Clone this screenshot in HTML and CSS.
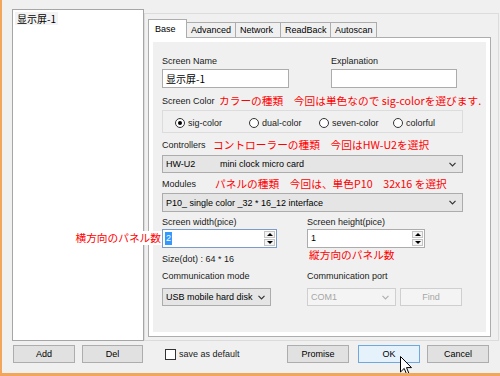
FILE: index.html
```html
<!DOCTYPE html>
<html lang="ja">
  <head>
    <meta charset="UTF-8" />
    <title>Screen settings</title>
    <link rel="stylesheet" href="styles.css">
  </head>
  <body>
    <div class="window">
      <div class="list">
        <div class="list-item">显示屏-1</div>
      </div>

      <div class="group">
        <div class="tabs">
          <div class="tab tab-base active">Base</div>
          <div class="tab tab-advanced">Advanced</div>
          <div class="tab tab-network">Network</div>
          <div class="tab tab-readback">ReadBack</div>
          <div class="tab tab-autoscan">Autoscan</div>
        </div>
        <div class="tab-panel">
          <div class="tab-page">
            <div class="row-two">
              <div class="name-field">
                <div class="label">Screen Name</div>
                <div class="input name-input">显示屏-1</div>
              </div>
              <div>
                <div class="label">Explanation</div>
                <div class="input expl-input"></div>
              </div>
            </div>

            <div class="caption-row caption-color">
              <span class="label">Screen Color</span>
              <span class="note">カラーの種類　今回は単色なので sig-colorを選びます.</span>
            </div>
            <div class="radio-box">
              <div class="radio radio-sig"><span class="radio-dot checked"></span>sig-color</div>
              <div class="radio radio-dual"><span class="radio-dot"></span>dual-color</div>
              <div class="radio radio-seven"><span class="radio-dot"></span>seven-color</div>
              <div class="radio"><span class="radio-dot"></span>colorful</div>
            </div>

            <div class="caption-row caption-ctrl">
              <span class="label">Controllers</span>
              <span class="note">コントローラーの種類　今回はHW-U2を選択</span>
            </div>
            <div class="select wide-select ctrl-select">
              <span class="sel-code">HW-U2</span>
              <span>mini clock micro card</span>
              <svg class="chevron" width="7" height="5" viewBox="0 0 7 5"><polyline points="0.5,0.8 3.5,3.8 6.5,0.8" fill="none" stroke="#333" stroke-width="1.2"/></svg>
            </div>

            <div class="caption-row caption-module">
              <span class="label">Modules</span>
              <span class="note">パネルの種類　今回は、単色P10　32x16 を選択</span>
            </div>
            <div class="select wide-select module-select">
              <span>P10_ single color _32 * 16_12 interface</span>
              <svg class="chevron" width="7" height="5" viewBox="0 0 7 5"><polyline points="0.5,0.8 3.5,3.8 6.5,0.8" fill="none" stroke="#333" stroke-width="1.2"/></svg>
            </div>

            <div class="size-grid">
              <div>
                <div class="label">Screen width(pice)</div>
                <div class="spin spin-width focused">
                  <span class="note note-side">横方向のパネル数</span>
                  <span class="spin-value selected">2</span>
                  <div class="spin-buttons">
                    <div class="spin-btn up"></div>
                    <div class="spin-btn down"></div>
                  </div>
                </div>
                <div class="size-text">Size(dot) : 64 * 16</div>
              </div>
              <div>
                <div class="label">Screen height(pice)</div>
                <div class="spin spin-height">
                  <span class="spin-value">1</span>
                  <div class="spin-buttons">
                    <div class="spin-btn up"></div>
                    <div class="spin-btn down"></div>
                  </div>
                </div>
                <div class="note note-below">縦方向のパネル数</div>
              </div>
            </div>

            <div class="comm-grid">
              <div>
                <div class="label">Communication mode</div>
                <div class="select comm-select">
                  <span>USB mobile hard disk</span>
                  <svg class="chevron" width="7" height="5" viewBox="0 0 7 5"><polyline points="0.5,0.8 3.5,3.8 6.5,0.8" fill="none" stroke="#333" stroke-width="1.2"/></svg>
                </div>
              </div>
              <div>
                <div class="label">Communication port</div>
                <div class="port-row">
                  <div class="select port-select disabled">
                    <span>COM1</span>
                    <svg class="chevron" width="7" height="5" viewBox="0 0 7 5"><polyline points="0.5,0.8 3.5,3.8 6.5,0.8" fill="none" stroke="#b0b0b0" stroke-width="1.2"/></svg>
                  </div>
                  <div class="btn btn-find disabled">Find</div>
                </div>
              </div>
            </div>
          </div>
        </div>
      </div>

      <div class="left-buttons">
        <div class="btn">Add</div>
        <div class="btn btn-del">Del</div>
      </div>
      <div class="right-buttons">
        <span class="checkbox"></span>
        <span class="check-label">save as default</span>
        <div class="btn btn-promise">Promise</div>
        <div class="btn btn-ok">OK</div>
        <div class="btn btn-cancel">Cancel</div>
      </div>
    </div>

    <!-- mouse pointer over OK -->
    <svg class="cursor" width="13" height="20" viewBox="0 0 13 20">
      <path d="M0.5,0.5 L0.5,16 L4.2,12.4 L6.8,18.6 L9,17.6 L6.5,11.6 L11.5,11.6 Z" fill="#fff" stroke="#000" stroke-width="1" stroke-linejoin="round"/>
    </svg>
  </body>
</html>
```

FILE: styles.css
```css
body {
  position: relative;
  width: 500px;
  height: 376px;
  margin: 0;
  box-sizing: border-box;
  overflow: hidden;
  border-left: 2px solid #f2a65c;
  border-bottom: 3px solid #f2a65c;
  background-color: #f0f0f0;
  font-family: "Liberation Sans", Arial, sans-serif;
  font-size: 9px;
  color: #1a1a1a;
}
.window {
  display: grid;
  grid-template-columns: 132px 355px;
  grid-template-rows: 332px 18px;
  row-gap: 4px;
  padding: 9px 0 0 10px;
}

/* left list */
.list {
  box-sizing: border-box;
  border: 1px solid #a6a6a6;
  background: #fff;
  padding: 2px;
}
.list-item {
  display: inline-block;
  padding: 0 2px;
  font-family: "Noto Sans CJK SC", sans-serif;
  font-size: 10px;
  line-height: 13px;
  color: #000;
  background: #f3f3f3;
}

/* right group with tabs */
.group {
  display: flex;
  flex-direction: column;
  height: 328px;
  margin-top: 4px;
  box-sizing: border-box;
  border: 1px solid #dcdcdc;
  padding: 5px 7px 3px 3px;
}
.tabs {
  position: relative;
  z-index: 1;
  display: flex;
  align-items: flex-end;
  height: 18px;
}
.tab {
  display: flex;
  align-items: center;
  height: 15px;
  box-sizing: border-box;
  margin-left: -1px;
  padding-left: 4px;
  border: 1px solid #adadad;
  border-bottom: none;
  background: #f0f0f0;
  color: #000;
}
.tab.active {
  height: 19px;
  margin-left: 0;
  margin-bottom: -1px;
  padding-left: 6px;
  background: #fff;
}
.tab-base { width: 39px; }
.tab-advanced { width: 50px; }
.tab-network { width: 46px; }
.tab-readback { width: 51px; }
.tab-autoscan { width: 47px; }

.tab-panel {
  flex: 1;
  display: flex;
  border: 1px solid #adadad;
  background: #fff;
  padding: 4px;
}
.tab-page {
  flex: 1;
  background: #f0f0f0;
  padding: 13px 0 0 9px;
}

/* fields */
.label {
  display: block;
  line-height: 12px;
}
.row-two {
  display: flex;
}
.name-field {
  width: 169px;
}
.input {
  height: 19px;
  margin-top: 2px;
  box-sizing: border-box;
  border: 1px solid #acacac;
  background: #fff;
}
.name-input {
  width: 127px;
  padding-left: 3px;
  font-family: "Noto Sans CJK SC", sans-serif;
  font-size: 10px;
  line-height: 17px;
  color: #000;
}
.expl-input {
  width: 126px;
}

.caption-row {
  display: flex;
  align-items: center;
  height: 14px;
}
.caption-color { margin-top: 6px; }
.caption-color .label { width: 57px; }
.caption-ctrl { margin-top: 5px; }
.caption-ctrl .label { width: 51px; }
.caption-module { margin-top: 4px; }
.caption-module .label { width: 53px; }

.note {
  font-family: "Noto Sans CJK JP", sans-serif;
  font-size: 10.7px;
  line-height: 14px;
  color: #ff0000;
  white-space: nowrap;
}

/* radios */
.radio-box {
  display: flex;
  align-items: center;
  width: 301px;
  height: 23px;
  margin-top: 2px;
  box-sizing: border-box;
  border: 1px solid #dcdcdc;
  padding: 2px 0 0 12px;
}
.radio {
  display: flex;
  align-items: center;
  gap: 3px;
}
.radio-sig { width: 74px; }
.radio-dual { width: 70px; }
.radio-seven { width: 74px; }
.radio-dot {
  width: 10px;
  height: 10px;
  box-sizing: border-box;
  border: 1px solid #333;
  border-radius: 50%;
  background: #fff;
}
.radio-dot.checked::after {
  content: "";
  display: block;
  width: 4px;
  height: 4px;
  margin: 2px;
  border-radius: 50%;
  background: #000;
}

/* selects */
.select {
  display: flex;
  align-items: center;
  height: 18px;
  box-sizing: border-box;
  border: 1px solid #acacac;
  background: #e5e5e5;
  padding: 0 6px 0 3px;
  color: #000;
}
.chevron {
  margin-left: auto;
}
.wide-select {
  width: 301px;
}
.ctrl-select { margin-top: 3px; }
.module-select {
  height: 19px;
  margin-top: 2px;
}
.sel-code {
  width: 54px;
}

/* spinners */
.size-grid,
.comm-grid {
  display: grid;
  grid-template-columns: 145px 1fr;
}
.size-grid { margin-top: 4px; }
.comm-grid { margin-top: 5px; }
.spin {
  position: relative;
  display: flex;
  align-items: center;
  height: 19px;
  margin-top: 1px;
  box-sizing: border-box;
  border: 1px solid #acacac;
  background: #fff;
  padding-left: 2px;
  color: #000;
}
.spin.focused {
  border-color: #7a9cc6;
}
.spin-width { width: 115px; }
.spin-height { width: 118px; }
.spin-value {
  padding: 0 1px;
  line-height: 13px;
}
.spin-value.selected {
  background: #3399ff;
  color: #fff;
}
.spin-buttons {
  display: flex;
  flex-direction: column;
  gap: 1px;
  margin-left: auto;
  margin-right: 1px;
}
.spin-btn {
  display: flex;
  align-items: center;
  justify-content: center;
  width: 11px;
  height: 7px;
  box-sizing: border-box;
  border: 1px solid #c4c4c4;
  background: #f4f4f4;
}
.spin-btn.up::after {
  content: "";
  border-left: 3px solid transparent;
  border-right: 3px solid transparent;
  border-bottom: 3px solid #000;
}
.spin-btn.down::after {
  content: "";
  border-left: 3px solid transparent;
  border-right: 3px solid transparent;
  border-top: 3px solid #000;
}
/* annotation laid over the list box */
.note-side {
  position: absolute;
  right: calc(100% + 1px);
  top: 1px;
  padding: 0 1px;
  background: #fff;
}
.note-below {
  margin-left: 2px;
}
.size-text {
  margin-top: 5px;
  line-height: 12px;
}

/* communication */
.comm-select {
  width: 109px;
  margin-top: 6px;
  padding-right: 5px;
}
.port-row {
  display: flex;
  gap: 4px;
  margin-top: 6px;
}
.port-select {
  width: 89px;
}
.select.disabled {
  border-color: #cfcfcf;
  background: #f4f4f4;
  color: #a6a6a6;
}

/* buttons */
.btn {
  display: flex;
  align-items: center;
  justify-content: center;
  width: 62px;
  height: 18px;
  box-sizing: border-box;
  border: 1px solid #adadad;
  background: #e1e1e1;
  color: #000;
}
.btn.disabled {
  border-color: #cfcfcf;
  background: #f4f4f4;
  color: #a6a6a6;
}
.left-buttons {
  display: flex;
  gap: 7px;
  padding-left: 1px;
}
.btn-del { width: 61px; }
.right-buttons {
  display: flex;
  align-items: center;
  padding: 0 10px 0 21px;
}
.checkbox {
  width: 11px;
  height: 11px;
  box-sizing: border-box;
  border: 1px solid #333;
  background: #fff;
}
.check-label {
  margin-left: 3px;
}
.btn-promise { margin-left: auto; }
.btn-ok {
  margin-left: 9px;
  border-color: #6fa8dc;
  background: #e5f1fb;
}
.btn-cancel { margin-left: 7px; }

.cursor {
  position: absolute;
  left: 398px;
  top: 356px;
}
```
